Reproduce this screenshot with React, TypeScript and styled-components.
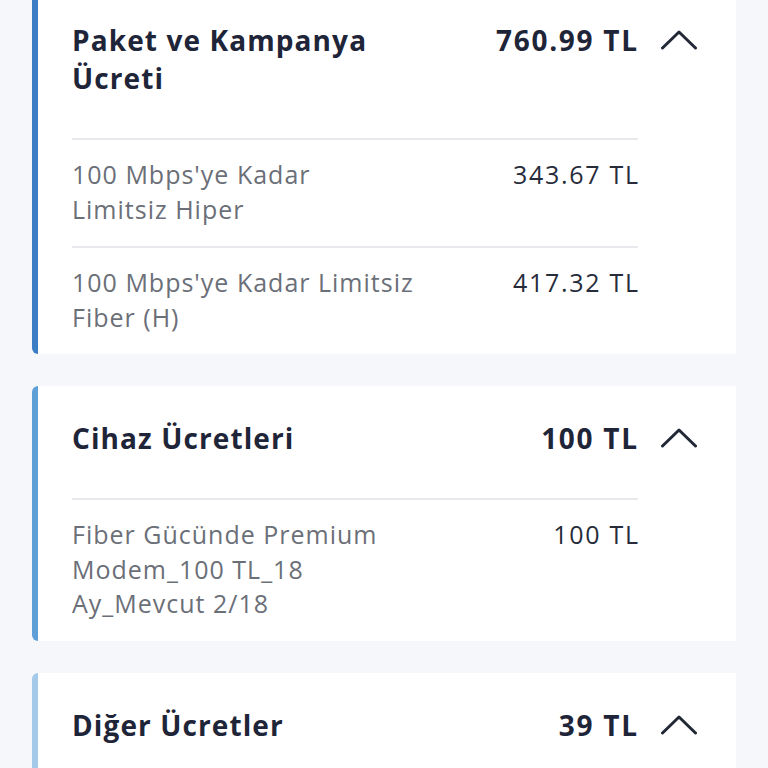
import React from 'react';
import styled, { createGlobalStyle } from 'styled-components';

const GlobalStyle = createGlobalStyle`
    html, body {
        margin: 0;
        padding: 0;
        background: #f5f7fa;
        font-family: 'Open Sans', 'Noto Sans', sans-serif;
    }
`;

const Page = styled.div`
    display: flex;
    flex-direction: column;
    gap: 32px;
    padding: 0 32px;
    margin-top: -12px;
`;

const Card = styled.section<{ $accent: string }>`
    background: #ffffff;
    border-left: 6px solid ${(p) => p.$accent};
    border-radius: 6px 0 0 6px;
    padding: 0 39px 0 34px;
`;

const Header = styled.div`
    display: flex;
    align-items: flex-start;
    padding: 33px 0 41px;
`;

const Title = styled.h2`
    flex: 1;
    margin: 0;
    font-size: 28px;
    line-height: 38px;
    font-weight: 700;
    letter-spacing: 1.1px;
    color: #1f2538;
`;

const Total = styled.span`
    font-size: 28px;
    line-height: 38px;
    font-weight: 700;
    letter-spacing: 1.7px;
    margin-right: -1.7px;
    color: #1f2538;
    white-space: nowrap;
`;

const Toggle = styled.button`
    display: flex;
    align-items: center;
    justify-content: center;
    width: 36px;
    height: 38px;
    margin-left: 24px;
    padding: 0;
    border: none;
    background: none;
    cursor: pointer;
`;

const Body = styled.div`
    margin-right: 59px;
`;

const Row = styled.div`
    display: flex;
    justify-content: space-between;
    align-items: flex-start;
    gap: 24px;
    padding: 17px 0 20px;
    border-top: 2px solid #e7e9ec;
`;

const Label = styled.div`
    font-size: 25px;
    line-height: 34.5px;
    letter-spacing: 1px;
    color: #6b6f78;
`;

const Amount = styled.div`
    font-size: 25px;
    line-height: 34.5px;
    letter-spacing: 1.7px;
    margin-right: -1.7px;
    color: #272c3a;
    white-space: nowrap;
`;

const ChevronUp = () => (
    <svg width="36" height="20" viewBox="0 0 36 20" fill="none">
        <polyline
            points="1.5,18 18,2 34.5,18"
            stroke="#222836"
            strokeWidth="3"
            strokeLinecap="round"
            strokeLinejoin="round"
        />
    </svg>
);

interface IItem {
    lines: string[];
    amount: string;
}

interface ISection {
    title: string[];
    total: string;
    accent: string;
    items: IItem[];
}

const sections: ISection[] = [
    {
        title: ['Paket ve Kampanya', 'Ücreti'],
        total: '760.99 TL',
        accent: '#3b7ec6',
        items: [
            { lines: ["100 Mbps'ye Kadar", 'Limitsiz Hiper'], amount: '343.67 TL' },
            { lines: ["100 Mbps'ye Kadar Limitsiz", 'Fiber (H)'], amount: '417.32 TL' },
        ],
    },
    {
        title: ['Cihaz Ücretleri'],
        total: '100 TL',
        accent: '#5d9fd6',
        items: [
            {
                lines: ['Fiber Gücünde Premium', 'Modem_100 TL_18', 'Ay_Mevcut 2/18'],
                amount: '100 TL',
            },
        ],
    },
    {
        title: ['Diğer Ücretler'],
        total: '39 TL',
        accent: '#a4c9e9',
        items: [],
    },
];

const App: React.FC = () => {
    return (
        <>
            <GlobalStyle />
            <Page>
                {sections.map((section) => (
                    <Card key={section.total} $accent={section.accent}>
                        <Header>
                            <Title>
                                {section.title.map((line, i) => (
                                    <React.Fragment key={line}>
                                        {i > 0 && <br />}
                                        {line}
                                    </React.Fragment>
                                ))}
                            </Title>
                            <Total>{section.total}</Total>
                            <Toggle type="button" aria-label="Daralt">
                                <ChevronUp />
                            </Toggle>
                        </Header>
                        <Body>
                            {section.items.map((item) => (
                                <Row key={item.lines.join(' ')}>
                                    <Label>
                                        {item.lines.map((line, i) => (
                                            <React.Fragment key={line}>
                                                {i > 0 && <br />}
                                                {line}
                                            </React.Fragment>
                                        ))}
                                    </Label>
                                    <Amount>{item.amount}</Amount>
                                </Row>
                            ))}
                        </Body>
                    </Card>
                ))}
            </Page>
        </>
    );
};

export default App;
